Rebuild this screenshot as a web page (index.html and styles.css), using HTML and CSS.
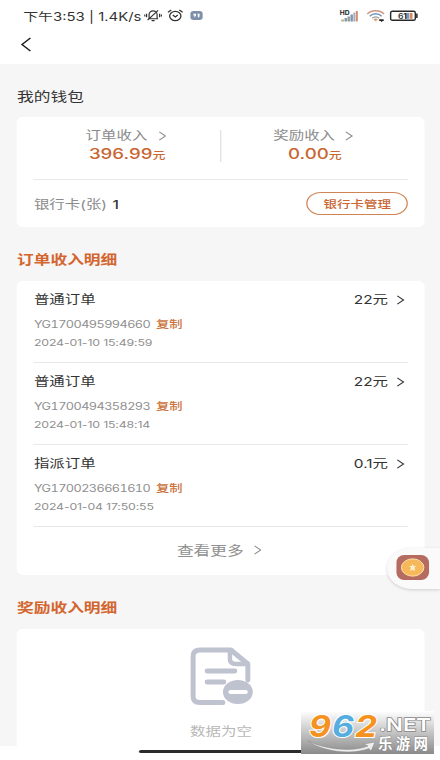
FILE: index.html
```html
<!DOCTYPE html>
<html lang="zh-CN">
<head>
<meta charset="utf-8">
<title>我的钱包</title>
<link rel="stylesheet" href="styles.css">
</head>
<body>
<div class="screen">
  <header class="status">
    <span class="clock">下午3:53 | 1.4K/s</span>
    <svg class="mute" preserveAspectRatio="none" viewBox="0 0 18 14"><g fill="none" stroke="#333" stroke-width="1.2"><path d="M4 10.5h10M5 10V6a4 4 0 0 1 8 0v4M7.5 12.5h3M3.5 12 14 1.5M2.5 5v4M.7 6v2M15.5 5v4M17.3 6v2"/></g></svg>
    <svg class="alarm" preserveAspectRatio="none" viewBox="0 0 16 14"><g fill="none" stroke="#333" stroke-width="1.3"><ellipse cx="8" cy="7.5" rx="5.6" ry="5"/><path d="M5.5 6.5 8 8.5l2.5-2M.7 3.5 4 1M15.3 3.5 12 1"/></g></svg>
    <svg class="app" preserveAspectRatio="none" viewBox="0 0 12 10"><rect width="12" height="10" rx="3" fill="#8090aa"/><path d="M3 3h2.5v2L4 7.500V5H3zM7 3h2v3L7.5 7.5z" fill="#fff"/></svg>
    <span class="grow"></span>
    <svg class="signal" preserveAspectRatio="none" viewBox="0 0 19 12"><path d="M1.5 11.5v-2h3v2z" fill="#c3b384"/><path d="M5 11.5V8h2.5v3.500z" fill="#78a0ac"/><path d="M8 11.500V6.500h2.500v5z" fill="#9b9c91"/><path d="M11 11.500V4.500h2.500v7z" fill="#7897b8"/><path d="M14 11.500V2.500h2v9z" fill="#a8abba"/><path d="M16.500 11.500V1h2v10.500z" fill="#d08b73"/><text x="0" y="5" textLength="10" lengthAdjust="spacingAndGlyphs">HD</text></svg>
    <svg class="wifi" preserveAspectRatio="none" viewBox="0 0 18 12"><g fill="none" stroke-width="1.5"><path d="M.6 4C5-.2 13-.2 17.400 4" stroke="#cf947f"/><path d="M3 6.200c3.500-3.200 8.500-3.200 12 0" stroke="#6e94ba"/><path d="M5.500 8.300c2-1.800 5-1.800 7 0" stroke="#9c9ca3"/></g><path d="m6.800 9.300 2.200-1 2.200 1L9 11.500z" fill="#d0a47a"/><path d="M12.500 9.300h4.500v1.700h-1.500v1h-1v-1h-2z" fill="#222"/></svg>
    <svg class="battery" preserveAspectRatio="none" viewBox="0 0 28 12"><rect x=".8" y="1.300" width="24.400" height="9" rx="1.600" fill="#fff" stroke="#292929" stroke-width="1.400"/><path d="M26 3.500h1.500v4.600H26z" fill="#292929"/><path d="M15 3h4v5.800h-4z" fill="#7799b9"/><path d="M19.500 3h3v5.800h-3z" fill="#d28966"/><text x="8" y="8.700" textLength="9" lengthAdjust="spacingAndGlyphs">61</text></svg>
  </header>
  <nav class="nav"><svg preserveAspectRatio="none" viewBox="0 0 10 15"><path d="M9 1 1.300 7.500 9 14"/></svg></nav>

  <main class="page">
    <h1 class="title">我的钱包</h1>
    <section class="card wallet">
      <div class="totals">
        <div class="total">
          <div class="label">订单收入<svg class="chev" preserveAspectRatio="none" viewBox="0 0 8 11"><path d="m1 1 6 4.500L1 10"/></svg></div>
          <div class="sum">396.99<small>元</small></div>
        </div>
        <div class="total">
          <div class="label">奖励收入<svg class="chev" preserveAspectRatio="none" viewBox="0 0 8 11"><path d="m1 1 6 4.500L1 10"/></svg></div>
          <div class="sum">0.00<small>元</small></div>
        </div>
      </div>
      <div class="bank"><span>银行卡(张) <b>1</b></span><button class="manage">银行卡管理</button></div>
    </section>

    <h2 class="title accent">订单收入明细</h2>
    <section class="card orders">
      <article class="order">
        <div class="head"><span>普通订单</span><span class="amount">22元<svg class="chev" preserveAspectRatio="none" viewBox="0 0 8 11"><path d="m1 1 6 4.500L1 10"/></svg></span></div>
        <div class="code"><span class="num">YG1700495994660</span><span class="copy">复制</span></div>
        <div class="date">2024-01-10 15:49:59</div>
      </article>
      <article class="order">
        <div class="head"><span>普通订单</span><span class="amount">22元<svg class="chev" preserveAspectRatio="none" viewBox="0 0 8 11"><path d="m1 1 6 4.500L1 10"/></svg></span></div>
        <div class="code"><span class="num">YG1700494358293</span><span class="copy">复制</span></div>
        <div class="date">2024-01-10 15:48:14</div>
      </article>
      <article class="order">
        <div class="head"><span>指派订单</span><span class="amount">0.1元<svg class="chev" preserveAspectRatio="none" viewBox="0 0 8 11"><path d="m1 1 6 4.500L1 10"/></svg></span></div>
        <div class="code"><span class="num">YG1700236661610</span><span class="copy">复制</span></div>
        <div class="date">2024-01-04 17:50:55</div>
      </article>
      <div class="more">查看更多<svg class="chev" preserveAspectRatio="none" viewBox="0 0 8 11"><path d="m1 1 6 4.500L1 10"/></svg></div>
    </section>

    <h2 class="title accent">奖励收入明细</h2>
    <section class="card empty">
      <svg class="doc" preserveAspectRatio="none" viewBox="0 0 64 58"><g fill="none" stroke="#bfc2cf" stroke-width="5" stroke-linecap="round" stroke-linejoin="round"><path d="M34 55.500H11q-7 0-7-6V9q0-6 7-6h31l17 14v16"/><path d="M41 4v8q0 5 6 5h11" stroke-width="4.500"/><path d="M18 24h28M18 35h17" stroke-width="4.800"/></g><ellipse cx="49" cy="45" rx="15" ry="12" fill="#bfc2cf"/><path d="M41.500 45H57" stroke="#fff" stroke-width="4" stroke-linecap="round"/></svg>
      <div>数据为空</div>
    </section>
  </main>
  <footer class="homebar"><i></i></footer>
  <aside class="bubble"><svg preserveAspectRatio="none" viewBox="0 0 33 26"><rect width="33" height="26" rx="8" fill="#b56b60"/><ellipse cx="16.500" cy="13" rx="11.300" ry="9" fill="#f7b85c" stroke="#ffe0ac" stroke-width="1"/><path d="m16.500 9 .9 2.400h2.800l-2 1.600.8 3.600-2.500-1.200-2.500 1.200.8-3.600-2-1.600h2.800z" fill="#fff1d0"/></svg></aside>
</div>
<aside class="watermark">
  <svg viewBox="0 0 133 43">
    <defs><linearGradient id="fade" x2="0" y2="1"><stop offset="0" stop-color="#fff"/><stop offset="1" stop-color="#8a8a8a"/></linearGradient></defs>
    <path d="M0 0h133v43H0z" fill="url(#fade)"/>
    <path d="M7 30c18 9 46 11 60 5l-4-2 11-2-4 9-2-2.500c-17 6.500-46 3.500-61-7.500z" fill="#eee" stroke="#888" stroke-width=".5"/>
    <g class="digits"><text x="8" y="26" textLength="22" lengthAdjust="spacingAndGlyphs" fill="#f69220">9</text><text x="31" y="26" textLength="22" lengthAdjust="spacingAndGlyphs" fill="#55ade0">6</text><text x="54" y="26" textLength="22" lengthAdjust="spacingAndGlyphs" fill="#f69220">2</text></g>
    <text class="net" x="78" y="20" textLength="52" lengthAdjust="spacingAndGlyphs">.NET</text>
    <text class="site" x="77" y="38" textLength="50">乐游网</text>
  </svg>
</aside>
</body>
</html>
```

FILE: styles.css
```css
* { box-sizing: border-box; }
body {
  margin: 0;
  width: 440px;
  height: 760px;
  overflow: hidden;
  position: relative;
  background: #fff;
}
svg { display: block; flex: none; }

/* Narrow canvas widened to the full window. */
.screen {
  position: relative;
  display: flex;
  flex-direction: column;
  width: 342px;
  height: 760px;
  transform: scaleX(1.28655);
  transform-origin: 0 0;
  font-family: Inter, "Noto Sans CJK SC", sans-serif;
  font-size: 12px;
  color: #333;
}

.status {
  display: flex;
  align-items: center;
  height: 30px;
  padding: 1px 17.5px 0 18px;
  flex: none;
}
.clock { font-size: 11.600px; white-space: pre; }
.status svg { overflow: visible; }
.mute { width: 14px; height: 13px; margin-left: 2px; }
.alarm { width: 12.500px; height: 13px; margin-left: 4.500px; }
.app { width: 9.500px; height: 9px; margin-left: 5.500px; }
.grow { flex: 1; }
.signal { width: 14.500px; height: 12px; }
.wifi { width: 14px; height: 12px; margin-left: 6.500px; }
.battery { width: 22px; height: 12px; margin-left: 4px; }
.signal text { font: bold 5.500px Inter, sans-serif; fill: #222; }
.battery text { font: 600 7.500px Inter, sans-serif; fill: #333; }

.nav { height: 33.500px; padding: 7px 0 0 16px; flex: none; }
.nav svg { width: 8.500px; height: 15px; }
.nav path { fill: none; stroke: #222; stroke-width: 1.400; }

.page {
  display: flex;
  flex-direction: column;
  height: 682px;
  padding: 20px 11.700px 0 13.200px;
  background: #f6f6f6;
  overflow: hidden;
  flex: none;
}
.title {
  margin: 0;
  height: 33.500px;
  line-height: 25px;
  font-size: 13px;
  font-weight: 400;
  flex: none;
}
.accent { height: 54px; padding-top: 19.500px; color: #d4652e; font-weight: 700; }
.card { background: #fff; border-radius: 5px; padding: 0 13.200px; flex: none; }
.chev { width: 6.500px; height: 10px; }
.chev path { fill: none; stroke: currentColor; stroke-width: 1.100; }

.wallet { height: 110px; }
.totals { display: flex; height: 63px; padding-top: 13px; border-bottom: 1.500px solid #e8e8e8; }
.total { flex: 1; height: 32px; display: flex; flex-direction: column; align-items: center; }
.total + .total { border-left: 1px solid #e2e2e2; }
.label { display: flex; align-items: center; height: 11px; gap: 8px; padding-right: 2px; color: #8b8b8b; line-height: 16px; }
.sum { margin-top: 3px; height: 20px; line-height: 20px; font-size: 14.500px; font-weight: 500; color: #c96632; }
.sum small { font-size: 10px; }
.bank { display: flex; align-items: center; justify-content: space-between; height: 47px; color: #8b8b8b; }
.bank b { color: #333; font-weight: 500; margin-left: 1px; }
.manage {
  width: 79px;
  height: 23px;
  padding: 0;
  border: 1px solid #cf8455;
  border-radius: 12px;
  background: none;
  font: 500 10.500px/19px "Noto Sans CJK SC", sans-serif;
  color: #c96632;
}

.orders { height: 294px; }
.order { height: 82px; padding-top: 9px; border-bottom: 1.500px solid #e8e8e8; }
.head { display: flex; justify-content: space-between; height: 19px; line-height: 19px; }
.amount { display: flex; align-items: center; gap: 6.500px; padding-right: 2.500px; }
.code { display: flex; align-items: center; justify-content: space-between; width: 115.500px; height: 20px; margin-top: 4.500px; font-size: 9.900px; color: #8f8f8f; }
.num { font-variant-numeric: tabular-nums; letter-spacing: -.44px; }
.copy { color: #cb733e; font-size: 10.300px; font-weight: 500; }
.date { height: 18px; line-height: 18px; font-size: 9.600px; letter-spacing: -.13px; padding-top: .5px; color: #8f8f8f; }
.more { display: flex; align-items: center; justify-content: center; gap: 7px; height: 48px; padding: 0 3px 3px 0; font-size: 13px; line-height: 18px; color: #8f8f8f; }

.empty { display: flex; flex-direction: column; align-items: center; height: 130px; padding-top: 18px; color: #b8b8b8; }
.doc { width: 49.500px; height: 58px; margin-bottom: 17px; }

.homebar { flex: 1; padding: 4.500px 0 0 107.500px; background: #fff; }
.homebar i { display: block; width: 128px; height: 3px; border-radius: 2px; background: #2b2b2b; }

.bubble {
  position: absolute;
  top: 548px;
  right: 0;
  width: 41px;
  height: 41px;
  padding: 7px 0 0 7px;
  background: #fafafa;
  border-radius: 20px 0 0 20px;
  box-shadow: 0 1px 3px rgba(0, 0, 0, .16);
}
.bubble svg { width: 25.500px; height: 25px; }

.watermark { position: absolute; left: 301px; top: 711px; width: 133px; height: 43px; }
.watermark text { font-family: Inter, "Noto Sans CJK SC", sans-serif; font-weight: 700; stroke: #fff; paint-order: stroke; }
.watermark svg { overflow: visible; }
.digits text { font-size: 30px; font-weight: 700; font-style: italic; stroke-width: 2px; }
.watermark .net { font-size: 17px; font-weight: 600; fill: #fff; stroke: #888; stroke-width: 1.400px; }
.watermark .site { font-size: 14.500px; fill: #fff; stroke: #888; stroke-width: 1px; }
```
